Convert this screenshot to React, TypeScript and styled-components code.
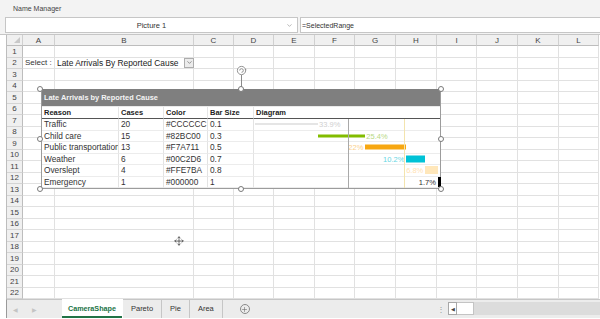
import React from 'react';
import styled, { createGlobalStyle } from 'styled-components';
import { ChevronDown, Move, Plus } from 'lucide-react';

const GlobalStyle = createGlobalStyle`
  html, body { margin: 0; padding: 0; background: #fff; }
  body { font-family: 'Liberation Sans', Arial, sans-serif; color: #222; }
  * { box-sizing: border-box; }
`;

interface Cause {
  reason: string;
  cases: number;
  color: string;
  size: number;
  label: string;
  labelColor: string;
  labelSide: 'left' | 'right';
}

const causes: Cause[] = [
  { reason: 'Traffic', cases: 20, color: '#CCCCCC', size: 0.1, label: '33.9%', labelColor: '#cfcfcf', labelSide: 'right' },
  { reason: 'Child care', cases: 15, color: '#82BC00', size: 0.3, label: '25.4%', labelColor: '#b9d985', labelSide: 'right' },
  { reason: 'Public transportation', cases: 13, color: '#F7A711', size: 0.5, label: '22%', labelColor: '#fbd08a', labelSide: 'left' },
  { reason: 'Weather', cases: 6, color: '#00C2D6', size: 0.7, label: '10.2%', labelColor: '#66d6e3', labelSide: 'left' },
  { reason: 'Overslept', cases: 4, color: '#FFE7BA', size: 0.8, label: '6.8%', labelColor: '#ffe2b3', labelSide: 'left' },
  { reason: 'Emergency', cases: 1, color: '#000000', size: 1, label: '1.7%', labelColor: '#333', labelSide: 'left' },
];

const columns = [
  { name: 'A', w: 32 },
  { name: 'B', w: 139 },
  { name: 'C', w: 40 },
  { name: 'D', w: 40 },
  { name: 'E', w: 41 },
  { name: 'F', w: 40 },
  { name: 'G', w: 41 },
  { name: 'H', w: 41 },
  { name: 'I', w: 40 },
  { name: 'J', w: 41 },
  { name: 'K', w: 41 },
  { name: 'L', w: 40 },
];

const ROWS = 22;
const DIAGRAM_W = 186;

const Window = styled.div`
  position: relative;
  width: 600px;
  height: 319px;
  overflow: hidden;
  background: #fff;
  display: flex;
  flex-direction: column;
`;

const TopBar = styled.div`
  height: 17px;
  background: #f3f3f3;
  font-size: 7px;
  color: #444;
  padding-left: 13px;
  display: flex;
  align-items: center;
`;

const FormulaRow = styled.div`
  height: 16px;
  display: flex;
  background: #f3f3f3;
  padding-left: 5px;
  gap: 2px;
`;

const NameBox = styled.div`
  width: 293px;
  background: #fff;
  border: 1px solid #c6c6c6;
  display: flex;
  align-items: center;
  justify-content: center;
  position: relative;
  font-size: 7.5px;
  color: #333;
  svg {
    position: absolute;
    right: 4px;
    top: 4px;
  }
`;

const FormulaBox = styled.div`
  flex: 1;
  background: #fff;
  border: 1px solid #c6c6c6;
  border-right: none;
  font-size: 7px;
  color: #333;
  display: flex;
  align-items: center;
  padding-left: 1px;
`;

const Spacer = styled.div`
  height: 2px;
  background: #f3f3f3;
  border-bottom: 1px solid #c6c6c6;
`;

const Sheet = styled.div`
  margin-left: 6px;
  display: grid;
  grid-template-columns: 16px ${columns.map((c) => `${c.w}px`).join(' ')};
  grid-template-rows: 11px repeat(${ROWS}, 11.5px);
  border-left: 1px solid #bdbdbd;
`;

const Corner = styled.div`
  background: #f0f0f0;
  border-right: 1px solid #d0d0d0;
  border-bottom: 1px solid #bdbdbd;
  position: relative;
  &::after {
    content: '';
    position: absolute;
    right: 2px;
    bottom: 2px;
    border-left: 6px solid transparent;
    border-bottom: 6px solid #c8c8c8;
  }
`;

const ColHead = styled.div`
  background: #f0f0f0;
  border-right: 1px solid #d0d0d0;
  border-bottom: 1px solid #bdbdbd;
  font-size: 8px;
  color: #444;
  display: flex;
  align-items: center;
  justify-content: center;
`;

const RowHead = styled.div`
  background: #f0f0f0;
  border-right: 1px solid #bdbdbd;
  border-bottom: 1px solid #d4d4d4;
  font-size: 8px;
  color: #444;
  display: flex;
  align-items: center;
  justify-content: center;
`;

const Cell = styled.div`
  border-right: 1px solid #e1e1e1;
  border-bottom: 1px solid #e1e1e1;
  font-size: 8px;
  color: #333;
  display: flex;
  align-items: center;
  padding-left: 2px;
  white-space: nowrap;
  overflow: visible;
  position: relative;
`;

const SelectBox = styled.div`
  flex: 1;
  display: flex;
  align-items: center;
  justify-content: space-between;
  padding-left: 0;
  font-size: 8.4px;
  color: #222;
  height: 100%;
`;

const DropButton = styled.div`
  width: 10px;
  height: 10px;
  border: 1px solid #adadad;
  background: #ececec;
  display: flex;
  align-items: center;
  justify-content: center;
  color: #555;
  margin-right: -1px;
`;

const TabBar = styled.div`
  height: 19px;
  margin-left: 6px;
  border-left: 1px solid #9a9a9a;
  border-top: 1px solid #c6c6c6;
  background: #ececec;
  display: flex;
  align-items: stretch;
  font-size: 7.5px;
`;

const NavArrows = styled.div`
  width: 55px;
  display: flex;
  align-items: center;
  gap: 14px;
  padding-left: 6px;
  color: #c4c4c4;
  font-size: 6px;
`;

const Tab = styled.div<{ $active?: boolean }>`
  padding: 0 ${(p) => (p.$active ? 6 : 8)}px;
  display: flex;
  align-items: center;
  border-right: 1px solid ${(p) => (p.$active ? 'transparent' : '#c6c6c6')};
  background: ${(p) => (p.$active ? '#fff' : 'transparent')};
  color: ${(p) => (p.$active ? '#217346' : '#333')};
  font-weight: ${(p) => (p.$active ? 700 : 400)};
  font-size: ${(p) => (p.$active ? 7.2 : 7.5)}px;
  box-shadow: ${(p) => (p.$active ? 'inset 0 -2px 0 #217346' : 'none')};
  margin-top: -1px;
`;

const AddSheet = styled.div`
  width: 10px;
  height: 10px;
  border: 1px solid #8a8a8a;
  border-radius: 50%;
  color: #6a6a6a;
  display: flex;
  align-items: center;
  justify-content: center;
  margin: auto 0 auto 17px;
`;

const TabFill = styled.div`
  flex: 1;
`;

const SplitDots = styled.div`
  display: flex;
  align-items: center;
  color: #999;
  font-size: 8px;
  padding: 0 3px;
`;

const Scrollbar = styled.div`
  width: 152px;
  margin: 2px 0 3px;
  background: #dcdcdc;
  display: flex;
`;

const ScrollArrow = styled.div`
  width: 9px;
  border: 1px solid #a8a8a8;
  background: #fff;
  display: flex;
  align-items: center;
  justify-content: center;
  font-size: 5px;
  color: #444;
`;

const ScrollThumb = styled.div`
  width: 17px;
  background: #fff;
  border: 1px solid #c4c4c4;
  border-left: none;
`;

/* camera picture floating over the sheet */
const Picture = styled.div`
  position: absolute;
  left: 41px;
  top: 89px;
  width: 400px;
  height: 100px;
  background: #fff;
  border: 1px solid #9c9c9c;
  border-top: none;
  display: flex;
  flex-direction: column;
`;

const PictureTitle = styled.div`
  height: 18px;
  background: #7f7f7f;
  color: #f4f4f4;
  font-size: 7.4px;
  font-weight: 700;
  display: flex;
  align-items: center;
  padding-left: 2px;
  border-bottom: 1px solid #eaeaea;
`;

const PicTable = styled.div`
  flex: 1;
  display: grid;
  grid-template-columns: 77px 45px 44px 46px 1fr;
  grid-template-rows: 12px repeat(6, 1fr);
  position: relative;
`;

const HeadCell = styled.div`
  font-size: 7.5px;
  font-weight: 700;
  color: #222;
  border-bottom: 1px solid #555;
  border-right: 1px solid #e6e6e6;
  display: flex;
  align-items: center;
  padding-left: 2px;
`;

const DataCell = styled.div`
  font-size: 8.3px;
  color: #333;
  border-bottom: 1px solid #ececec;
  border-right: 1px solid #e3e3e3;
  display: flex;
  align-items: center;
  padding-left: 2px;
  white-space: nowrap;
  overflow: hidden;
`;

const DiagramCell = styled.div`
  position: relative;
  border-bottom: 1px solid #ececec;
`;

const Bar = styled.div`
  position: absolute;
  top: 50%;
  transform: translateY(-50%);
`;

const BarLabel = styled.span`
  position: absolute;
  top: 50%;
  transform: translateY(-50%);
  font-size: 7.5px;
  white-space: nowrap;
`;

const GuideLine = styled.div<{ $color: string }>`
  position: absolute;
  top: 12px;
  bottom: 0;
  width: 1px;
  background: ${(p) => p.$color};
`;

const Handle = styled.div`
  position: absolute;
  width: 6px;
  height: 6px;
  margin: -3px 0 0 -3px;
  border-radius: 50%;
  border: 1px solid #7a7a7a;
  background: #fff;
`;

const RotateStem = styled.div`
  position: absolute;
  left: 241px;
  top: 75px;
  width: 1px;
  height: 13px;
  background: #8a8a8a;
`;

const RotateIcon = styled.svg`
  position: absolute;
  left: 236px;
  top: 65px;
`;

const Pointer = styled.div`
  position: absolute;
  left: 174px;
  top: 236px;
  color: #333;
  display: flex;
`;

const handles = [
  [40, 89], [241, 89], [441, 89],
  [40, 139], [441, 139],
  [40, 189], [241, 189], [441, 189],
];

function Diagram({ cause, start }: { cause: Cause; start: number }) {
  const total = causes.reduce((s, c) => s + c.cases, 0);
  const width = (cause.cases / total) * DIAGRAM_W;
  const height = Math.max(1, Math.round(cause.size * 10));
  const left = 1 + start;
  return (
    <DiagramCell>
      <Bar style={{ left, width, height, background: cause.color }} />
      {cause.labelSide === 'right' ? (
        <BarLabel style={{ left: left + width + 1, color: cause.labelColor }}>{cause.label}</BarLabel>
      ) : (
        <BarLabel style={{ right: DIAGRAM_W + 1 - left + 1, color: cause.labelColor }}>{cause.label}</BarLabel>
      )}
    </DiagramCell>
  );
}

export default function App() {
  const total = causes.reduce((s, c) => s + c.cases, 0);
  let acc = 0;
  const starts = causes.map((c) => {
    const s = acc;
    acc += (c.cases / total) * DIAGRAM_W;
    return s;
  });

  return (
    <>
      <GlobalStyle />
      <Window>
        <TopBar>Name Manager</TopBar>
        <FormulaRow>
          <NameBox>
            Picture 1
            <ChevronDown size={7} color="#888" />
          </NameBox>
          <FormulaBox>=SelectedRange</FormulaBox>
        </FormulaRow>
        <Spacer />
        <Sheet>
          <Corner />
          {columns.map((c) => (
            <ColHead key={c.name}>{c.name}</ColHead>
          ))}
          {Array.from({ length: ROWS }, (_, i) => i + 1).map((r) => (
            <React.Fragment key={r}>
              <RowHead>{r}</RowHead>
              {columns.map((c) => {
                if (r === 2 && c.name === 'A') return <Cell key={c.name}>Select :</Cell>;
                if (r === 2 && c.name === 'B')
                  return (
                    <Cell key={c.name}>
                      <SelectBox>
                        Late Arrivals By Reported Cause
                        <DropButton>
                          <ChevronDown size={7} strokeWidth={2} />
                        </DropButton>
                      </SelectBox>
                    </Cell>
                  );
                return <Cell key={c.name} />;
              })}
            </React.Fragment>
          ))}
        </Sheet>
        <TabBar>
          <NavArrows>
            <span>◀</span>
            <span>▶</span>
          </NavArrows>
          <Tab $active>CameraShape</Tab>
          <Tab>Pareto</Tab>
          <Tab>Pie</Tab>
          <Tab>Area</Tab>
          <AddSheet>
            <Plus size={7} strokeWidth={2} />
          </AddSheet>
          <TabFill />
          <SplitDots>⋮</SplitDots>
          <Scrollbar>
            <ScrollArrow>◀</ScrollArrow>
            <ScrollThumb />
          </Scrollbar>
        </TabBar>

        <Picture>
          <PictureTitle>Late Arrivals by Reported Cause</PictureTitle>
          <PicTable>
            <HeadCell>Reason</HeadCell>
            <HeadCell>Cases</HeadCell>
            <HeadCell>Color</HeadCell>
            <HeadCell>Bar Size</HeadCell>
            <HeadCell style={{ borderRight: 'none' }}>Diagram</HeadCell>
            {causes.map((c, i) => (
              <React.Fragment key={c.reason}>
                <DataCell>{c.reason}</DataCell>
                <DataCell>{c.cases}</DataCell>
                <DataCell>{c.color}</DataCell>
                <DataCell>{c.size}</DataCell>
                <Diagram cause={c} start={starts[i]} />
              </React.Fragment>
            ))}
            <GuideLine $color="#a9a9a9" style={{ left: 212 + 1 + DIAGRAM_W * 0.5 }} />
            <GuideLine $color="#f3e4ae" style={{ left: 212 + 1 + DIAGRAM_W * 0.8 }} />
          </PicTable>
        </Picture>

        <RotateStem />
        <RotateIcon width="11" height="11" viewBox="0 0 12 12">
          <circle cx="6" cy="6" r="4.5" fill="#fff" stroke="#888" strokeWidth="1" />
          <path d="M4 6 a2 2 0 1 1 2 2" fill="none" stroke="#888" strokeWidth="1" />
          <path d="M9.5 4.5 l2 0.5 l-1 1.5 z" fill="#888" />
        </RotateIcon>
        {handles.map(([x, y]) => (
          <Handle key={`${x}-${y}`} style={{ left: x, top: y }} />
        ))}
        <Pointer>
          <Move size={10} strokeWidth={1.6} />
        </Pointer>
      </Window>
    </>
  );
}
